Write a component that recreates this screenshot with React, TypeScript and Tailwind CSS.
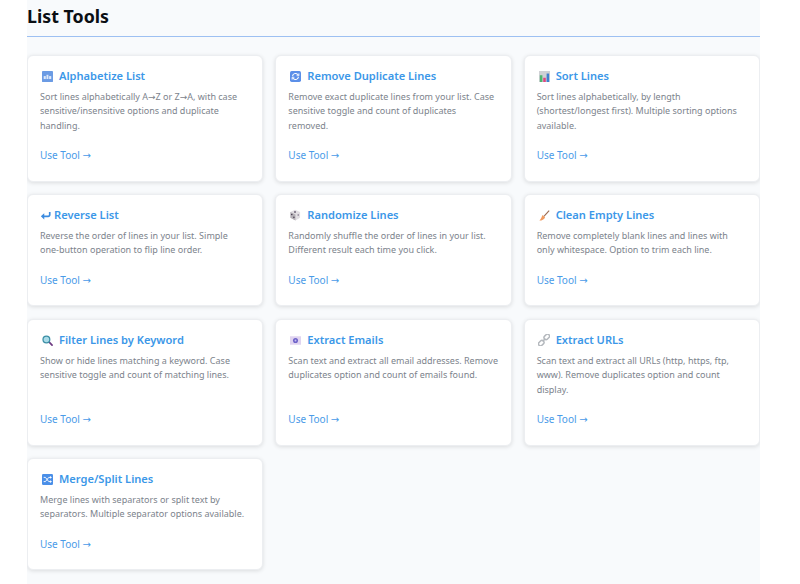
import type { ReactNode } from "react";

const AbcIcon = () => (
  <svg width="11" height="11" viewBox="0 0 13 13">
    <rect width="13" height="13" rx="1" fill="#6b9be4" />
    <rect x="2" y="6" width="2.5" height="3.5" fill="#dce8fa" />
    <rect x="5.3" y="4.5" width="2.3" height="5" fill="#dce8fa" />
    <rect x="8.4" y="6" width="2.5" height="3.5" fill="#dce8fa" />
  </svg>
);

const RepeatIcon = () => (
  <svg width="11" height="11" viewBox="0 0 13 13" fill="none">
    <rect width="13" height="13" rx="2" fill="#5b8fe8" />
    <path d="M3 6a3.5 3.5 0 0 1 6-2l1 1M10 7a3.5 3.5 0 0 1-6 2L3 8" stroke="#fff" strokeWidth="1.2" />
    <path d="M10.5 2.8v2.8H7.8M2.5 10.2V7.4h2.7" stroke="#fff" strokeWidth="1" />
  </svg>
);

const ChartIcon = () => (
  <svg width="11" height="11" viewBox="0 0 13 13">
    <rect width="13" height="13" fill="#cfd1d5" />
    <rect x="1" y="5" width="3" height="8" fill="#4fb56f" />
    <rect x="5" y="8" width="3" height="5" fill="#e0457f" />
    <rect x="9" y="3" width="3" height="10" fill="#3f7fd0" />
  </svg>
);

const ReturnIcon = () => (
  <svg width="11" height="11" viewBox="0 0 13 13" fill="none">
    <path d="M11.5 2.5v3.2a1.8 1.8 0 0 1-1.8 1.8H3" stroke="#3b8be0" strokeWidth="2" />
    <path d="M5 3.8 1 7.5 5 11.2z" fill="#3b8be0" />
  </svg>
);

const DiceIcon = () => (
  <svg width="12" height="12" viewBox="0 0 13 13">
    <path d="M6.5.8 12 3.2v6.4l-5 2.8-5.5-3V3.2z" fill="#e2dfe3" />
    <path d="M1.5 3.2 7 6v6.4l-5.5-3z" fill="#b5b1b7" />
    <circle cx="6.5" cy="3.2" r="1" fill="#6a5f72" />
    <circle cx="3" cy="6" r=".9" fill="#4d4354" />
    <circle cx="5.3" cy="9" r=".9" fill="#4d4354" />
    <circle cx="10" cy="6.5" r=".9" fill="#7d7286" />
  </svg>
);

const BroomIcon = () => (
  <svg width="11" height="11" viewBox="0 0 13 13" fill="none">
    <path d="M12 .8 5.8 7.5" stroke="#9b6a50" strokeWidth="1.3" />
    <path d="M4.2 6 7.2 8.8C6.2 11 3.5 12.5.5 12.5 2.5 11 3 8 4.2 6z" fill="#f09a5f" />
  </svg>
);

const SearchIcon = () => (
  <svg width="11" height="11" viewBox="0 0 13 13" fill="none">
    <path d="m8.5 8.5 3.4 3.4" stroke="#6d3a82" strokeWidth="2" strokeLinecap="round" />
    <circle cx="5.2" cy="5.2" r="4" fill="#a9dbe8" stroke="#3c8fa5" strokeWidth="1.5" />
  </svg>
);

const EmailIcon = () => (
  <svg width="11" height="11" viewBox="0 0 13 13">
    <rect y="1.5" width="13" height="10" fill="#e0d4f0" />
    <circle cx="6.5" cy="6.5" r="3" fill="#6f63c8" />
    <circle cx="6.5" cy="6.5" r="1.1" fill="#c6bff0" />
  </svg>
);

const LinkIcon = () => (
  <svg width="12" height="12" viewBox="0 0 13 13" fill="none" stroke="#b4b8bd" strokeWidth="1.6">
    <rect x="6.2" y=".9" width="6.6" height="4.4" rx="2.2" transform="rotate(-45 9.5 3.1)" />
    <rect x=".2" y="7.7" width="6.6" height="4.4" rx="2.2" transform="rotate(-45 3.5 9.9)" />
    <path d="m5 8 3-3" />
  </svg>
);

const ShuffleIcon = () => (
  <svg width="11" height="11" viewBox="0 0 13 13" fill="none">
    <rect width="13" height="13" rx="1.5" fill="#4a8fe8" />
    <path d="M2 4h2l4 5h3M2 9h2l4-5h3" stroke="#fff" strokeWidth="1.1" />
    <path d="M9.5 2.4 11.6 4 9.5 5.6zM9.5 7.4 11.6 9l-2.1 1.6z" fill="#fff" />
  </svg>
);

type Tool = { icon: ReactNode; title: string; desc: ReactNode; narrow?: boolean };

const tools: Tool[] = [
  { icon: <AbcIcon />, title: "Alphabetize List", desc: "Sort lines alphabetically A→Z or Z→A, with case sensitive/insensitive options and duplicate handling." },
  {
    icon: <RepeatIcon />,
    title: "Remove Duplicate Lines",
    desc: (
      <>
        Remove exact duplicate lines from your list. Case sensitive toggle and count of duplicates
        <br />
        removed.
      </>
    ),
  },
  { icon: <ChartIcon />, title: "Sort Lines", desc: "Sort lines alphabetically, by length (shortest/longest first). Multiple sorting options available." },
  {
    icon: <ReturnIcon />,
    title: "Reverse List",
    desc: (
      <>
        Reverse the order of lines in your list. Simple <span className="whitespace-nowrap">one-button</span> operation to flip line order.
      </>
    ),
    narrow: true,
  },
  { icon: <DiceIcon />, title: "Randomize Lines", desc: "Randomly shuffle the order of lines in your list. Different result each time you click." },
  { icon: <BroomIcon />, title: "Clean Empty Lines", desc: "Remove completely blank lines and lines with only whitespace. Option to trim each line." },
  { icon: <SearchIcon />, title: "Filter Lines by Keyword", desc: "Show or hide lines matching a keyword. Case sensitive toggle and count of matching lines." },
  { icon: <EmailIcon />, title: "Extract Emails", desc: "Scan text and extract all email addresses. Remove duplicates option and count of emails found." },
  { icon: <LinkIcon />, title: "Extract URLs", desc: "Scan text and extract all URLs (http, https, ftp, www). Remove duplicates option and count display." },
  { icon: <ShuffleIcon />, title: "Merge/Split Lines", desc: "Merge lines with separators or split text by separators. Multiple separator options available." },
];

function ToolCard({ icon, title, desc, narrow }: Tool) {
  return (
    <div className="flex flex-col rounded-md border border-[#eceef1] bg-white pt-[11.5px] pr-[11.5px] pb-[17.25px] pl-3 shadow-[0_1px_4px_rgba(0,0,0,0.12)]">
      <h3 className="flex h-[17px] items-center text-[11.1px] font-semibold text-[#3b97e8]">
        <span className={narrow ? "mr-[3px] flex w-[11px]" : "mr-[6px] flex w-[13px] justify-end"}>{icon}</span>
        <span>{title}</span>
      </h3>
      <p className="mt-[5px] mb-[15.25px] text-[9px] leading-[14.5px] text-[#7c838c]">{desc}</p>
      <a href="#" className="mt-auto text-[10px] leading-[15px] text-[#4a9be8]">
        Use Tool →
      </a>
    </div>
  );
}

export default function App() {
  return (
    <div className="ml-[27px] h-[584px] w-[733px] overflow-hidden bg-[#f8fafc] font-['Noto_Sans','DejaVu_Sans',sans-serif]">
      <h2 className="h-[37px] border-b border-[#9dc0f2] pt-[3px] text-[17.8px] leading-[26px] font-bold text-[#0b0f14]">
        List Tools
      </h2>
      <div className="mt-[18px] grid grid-cols-3 gap-x-3 gap-y-[12.75px]">
        {tools.map((tool) => (
          <ToolCard key={tool.title} {...tool} />
        ))}
      </div>
    </div>
  );
}
